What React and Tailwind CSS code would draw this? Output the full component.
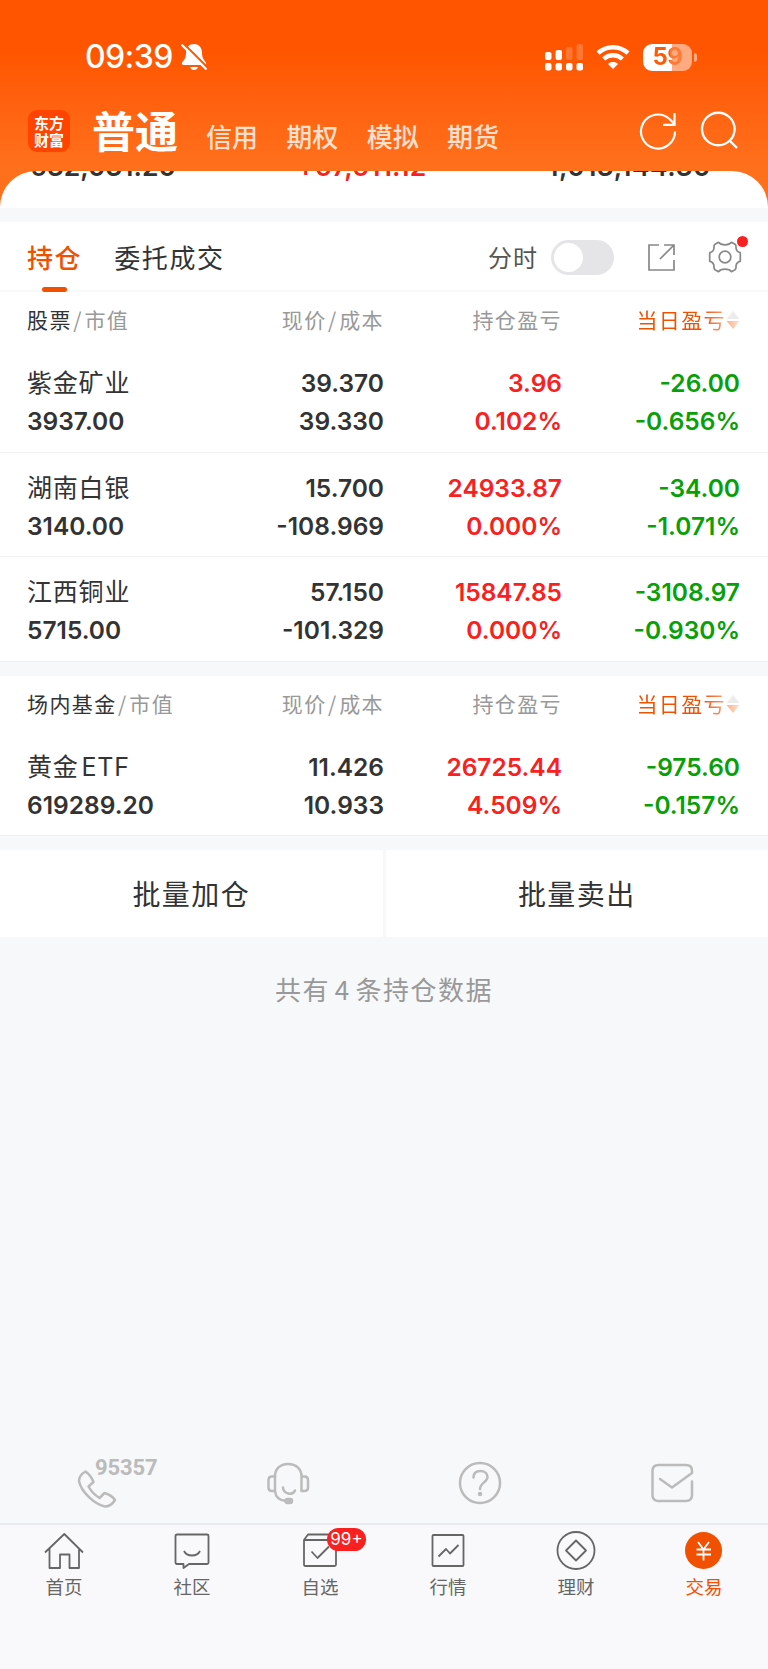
import React from 'react';
import clsx from 'clsx';

const stocks = [
  {
    name: '紫金矿业',
    value: '3937.00',
    price: '39.370',
    cost: '39.330',
    profit: '3.96',
    profitRate: '0.102%',
    day: '-26.00',
    dayRate: '-0.656%',
  },
  {
    name: '湖南白银',
    value: '3140.00',
    price: '15.700',
    cost: '-108.969',
    profit: '24933.87',
    profitRate: '0.000%',
    day: '-34.00',
    dayRate: '-1.071%',
  },
  {
    name: '江西铜业',
    value: '5715.00',
    price: '57.150',
    cost: '-101.329',
    profit: '15847.85',
    profitRate: '0.000%',
    day: '-3108.97',
    dayRate: '-0.930%',
  },
];

const funds = [
  {
    name: '黄金 ETF',
    value: '619289.20',
    price: '11.426',
    cost: '10.933',
    profit: '26725.44',
    profitRate: '4.509%',
    day: '-975.60',
    dayRate: '-0.157%',
  },
];

function StatusBar() {
  return (
    <div className="flex h-[114px] items-center justify-between pl-[85px] pr-[71px]">
      <div className="flex items-center gap-2 text-white">
        <span className="font-['Inter'] text-[32px] font-medium leading-none tracking-[-0.6px]">
          09:39
        </span>
        <svg width="26" height="28" viewBox="0 0 26 28" fill="none">
          <path
            d="M13 1C8.500 1 5.200 4.400 5.100 9c-.1 5.500-1.600 7.500-3.700 10-1 1.300-.6 3 1.200 3h20.800c1.800 0 2.200-1.700 1.200-3-2.100-2.500-3.600-4.500-3.700-10C20.800 4.400 17.500 1 13 1z"
            fill="white"
          />
          <path d="M9 24h8c-.6 2-2 3-4 3s-3.400-1-4-3z" fill="white" />
          <path d="M3 1l24 24" stroke="#ff5700" strokeWidth="2" />
          <path d="M1.200 2.200l23.600 23.600" stroke="white" strokeWidth="2.200" strokeLinecap="round" />
        </svg>
      </div>
      <div className="flex items-center">
        <svg width="39" height="28" viewBox="0 0 39 28" fill="white">
          <rect x="0" y="9" width="6.500" height="8" rx="2" />
          <rect x="10.500" y="7" width="6.500" height="10" rx="2" />
          <rect x="21" y="4" width="6.500" height="13" rx="2" opacity=".2" />
          <rect x="31.500" y="1" width="6.500" height="16" rx="2" opacity=".2" />
          <rect x="0" y="20" width="6.500" height="7.500" rx="2" />
          <rect x="10.500" y="20" width="6.500" height="7.500" rx="2" />
          <rect x="21" y="20" width="6.500" height="7.500" rx="2" />
          <rect x="31.500" y="20" width="6.500" height="7.500" rx="2" />
        </svg>
        <svg className="ml-3" width="34" height="26" viewBox="0 0 34 26" fill="none">
          <path d="M2 9.200C10.500 1.200 23.500 1.200 32 9.200" stroke="white" strokeWidth="4.600" />
          <path d="M7.600 15C13 10 21 10 26.400 15" stroke="white" strokeWidth="4.400" />
          <path d="M17 25l-5-5c2.800-2.600 7.200-2.600 10 0z" fill="white" />
        </svg>
        <div className="ml-[13px] flex h-[27px] w-[49px] items-center justify-center rounded-[9px] bg-linear-to-r from-white from-60% to-[#ffaa80] to-60%">
          <span className="bg-linear-to-r from-[#ff5a05] from-60% to-[#ff7a35] to-60% bg-clip-text font-['Inter'] text-[24px] font-bold leading-none tracking-[-0.5px] text-transparent">
            59
          </span>
        </div>
        <div className="ml-[2px] h-[9px] w-[3px] rounded-r-full bg-[#ffaa80]"></div>
      </div>
    </div>
  );
}

function TopNav() {
  return (
    <div className="flex h-[57px] items-start pl-7 pr-[30px]">
      <div className="mt-[-4px] flex h-[42px] w-[42px] flex-col items-center justify-center rounded-[9px] bg-[#ff4400] text-[15px] font-bold leading-[17px] text-white">
        <span>东方</span>
        <span>财富</span>
      </div>
      <div className="mt-[-7px] pl-[22px] text-[43px] font-bold leading-[44px] text-white">普通</div>
      <div className="mt-1 flex gap-[28.300px] pl-7 text-[26px] font-medium leading-[36px] text-[#ffe0cf]">
        <span>信用</span>
        <span>期权</span>
        <span>模拟</span>
        <span>期货</span>
      </div>
      <div className="ml-auto mt-[-3px] flex gap-[23px]">
        <svg width="38" height="40" viewBox="0 0 38 40" fill="none" stroke="white" strokeWidth="2.200">
          <path d="M36 20.500a17 17 0 1 1-5.500-12.500L36 13.500" />
          <path d="M35.500 2v11.800H24" />
        </svg>
        <svg width="38" height="40" viewBox="0 0 38 40" fill="none" stroke="white" strokeWidth="2.400">
          <circle cx="18.300" cy="18" r="16.300" />
          <path d="M29.500 29.500l7.500 7.500" />
        </svg>
      </div>
    </div>
  );
}

function Tabs() {
  return (
    <div className="flex h-[70px] items-start border-b-2 border-[#f7f8fa] bg-white pl-[27px] pr-[26px]">
      <div className="flex h-[70px] flex-col items-center justify-between text-[26px] font-medium leading-[70px] tracking-[1.600px] text-[#f05000]">
        <span className="h-[64px]">持仓</span>
        <span className="h-[5px] w-[25px] rounded-full bg-[#f05000]"></span>
      </div>
      <div className="pl-8 text-[26px] leading-[70px] tracking-[1.600px] text-[#333]">委托成交</div>
      <div className="ml-auto flex h-[70px] items-center">
        <span className="text-[24px] tracking-[1px] text-[#555]">分时</span>
        <div className="ml-[13px] h-[35px] w-[63px] rounded-full bg-[#e5e5e7] p-[3px]">
          <div className="h-[29px] w-[29px] rounded-full bg-white"></div>
        </div>
        <svg
          className="ml-[33px]"
          width="29"
          height="29"
          viewBox="0 0 29 29"
          fill="none"
          stroke="#888"
          strokeWidth="1.700"
        >
          <path d="M12 2H2v25h25V17" />
          <path d="M17 2h10v10M27 2L13 16" />
        </svg>
        <div className="relative ml-8">
          <svg width="34" height="34" viewBox="0 0 34 34" fill="none" stroke="#888" strokeWidth="1.700">
            <path
              d="M10.500 2.300C12 4.300 14 4.800 17 4.800S22 4.300 23.500 2.300L27 4.300Q28.300 5.200 28 8 28.300 11.500 32 12.600L32.300 13V21L32 21.400Q28.300 22.500 28 26 28.300 28.800 27 29.700L23.500 31.700C22 29.700 20 29.200 17 29.200S12 29.700 10.500 31.700L7 29.700Q5.700 28.800 6 26 5.700 22.500 2 21.400L1.700 21V13L2 12.600Q5.700 11.500 6 8 5.700 5.200 7 4.300z"
              strokeLinejoin="round"
            />
            <circle cx="17" cy="17" r="5.800" />
          </svg>
          <span className="absolute right-[-6px] top-[-4px] h-[11px] w-[11px] rounded-full bg-[#fa2020]"></span>
        </div>
      </div>
    </div>
  );
}

const columns = 'grid grid-cols-[167px_190px_178px_178px] pl-[27px]';

function Section({ title, rows, headClass }) {
  return (
    <div className="bg-white">
      <div
        className={clsx(columns, headClass, 'items-center text-right text-[21px] tracking-[1.400px] text-[#999]')}
      >
        <div className="whitespace-nowrap text-left">
          <span className="text-[#333]">{title}</span>
          <span className="px-[1.500px]">/</span>市值
        </div>
        <div>
          现价<span className="px-[1.500px]">/</span>成本
        </div>
        <div>持仓盈亏</div>
        <div className="flex items-center justify-end">
          <span className="bg-linear-to-r from-[#f05000] from-75% to-[#fba070] bg-clip-text text-transparent">
            当日盈亏
          </span>
          <svg width="14" height="20" viewBox="0 0 14 20">
            <defs>
              <linearGradient id="fade" x1="0" x2="1" y1="0" y2="0">
                <stop offset="0" stopColor="#f9b48e" />
                <stop offset="1" stopColor="#fde0d0" />
              </linearGradient>
            </defs>
            <path d="M7 1l6.500 8H.5z" fill="#ececec" />
            <path d="M7 19l6.500-8H.5z" fill="url(#fade)" />
          </svg>
        </div>
      </div>
      {rows.map((row) => (
        <div
          key={row.name}
          className={clsx(
            columns,
            "h-[104.500px] border-b border-[#f0f1f3] pt-4 text-right font-['Inter','Noto_Sans_CJK_SC',sans-serif] text-[24.500px] font-semibold leading-[38px] text-[#333]",
          )}
        >
          <div className="whitespace-nowrap text-left">
            <div className="text-[25px] font-normal tracking-[0.800px] [word-spacing:-5px]">{row.name}</div>
            <div>{row.value}</div>
          </div>
          <div>
            <div>{row.price}</div>
            <div>{row.cost}</div>
          </div>
          <div className="text-[#fa2020]">
            <div>{row.profit}</div>
            <div>{row.profitRate}</div>
          </div>
          <div className="text-[#08a008]">
            <div>{row.day}</div>
            <div>{row.dayRate}</div>
          </div>
        </div>
      ))}
    </div>
  );
}

function HelpLinks() {
  const icon = { fill: 'none', stroke: '#bbb', strokeWidth: 2.5, strokeLinecap: 'round', strokeLinejoin: 'round' };
  return (
    <div className="grid h-[66px] grid-cols-4 overflow-hidden text-center text-[21px] leading-[30px] text-[#666]">
      <div className="flex flex-col items-center">
        <div className="relative h-[60px] w-[80px] shrink-0">
          <svg width="80" height="60" viewBox="0 0 80 60" {...icon}>
            <path d="M29.500 14.500c-3.500 2-6.500 5.500-6.500 9.500 2 11 16 23.500 26 25.500 4 0 7.500-2.500 10-6.500-2.500-3.500-6.500-6-10.500-7l-5 5c-4-2.500-8.500-7-11-11.500l5-4.500c-1.500-4-4.500-8-8-10.500z" />
          </svg>
          <span className="absolute left-[39px] top-0 font-['Roboto'] text-[22px] font-bold leading-[22px] tracking-[-0.100px] text-[#bbb]">
            95357
          </span>
        </div>
        <span className="pt-[1px]">服务热线</span>
      </div>
      <div className="flex flex-col items-center">
        <svg className="shrink-0" width="60" height="60" viewBox="0 0 60 60" {...icon}>
          <path d="M17 34V19.500C17 12 22 7 30 7s13.500 5 13.500 12.500V34h3q3.500 0 3.500-3.500V23q0-3.500-3.500-3.500h-3" />
          <path d="M17 19.500h-3Q10.500 19.500 10.500 23v7.500q0 3.500 3.500 3.500H17c.5 6 4.500 9.500 11 10" />
          <path d="M25 30.500c.5 7 10 8 12 3" />
          <rect x="27.500" y="42" width="6.500" height="4" rx="2" fill="#bbb" />
        </svg>
        <span className="pt-[1px]">在线客服</span>
      </div>
      <div className="flex flex-col items-center">
        <svg className="shrink-0" width="60" height="60" viewBox="0 0 60 60" {...icon}>
          <circle cx="30" cy="26" r="20" />
          <path d="M23.500 20.500c0-4.500 3-6.500 7-6.500s7 2.500 7 6c0 5-7.500 6-7.500 12" />
          <circle cx="30" cy="37" r="1" fill="#bbb" />
        </svg>
        <span className="pt-[1px]">帮助中心</span>
      </div>
      <div className="flex flex-col items-center">
        <svg className="shrink-0" width="60" height="60" viewBox="0 0 60 60" {...icon}>
          <path d="M50 24.500V38q0 6-6 6H16.500q-6 0-6-6V14q0-6 6-6H44q6 0 6 6V16L30 30.500l-12-8.500" />
        </svg>
        <span className="pt-[1px]">意见反馈</span>
      </div>
    </div>
  );
}

function NavItem({ label, active, badge, children }) {
  return (
    <div className={clsx('flex flex-col items-center', active ? 'text-[#f05000]' : 'text-[#666]')}>
      <div className="relative h-[40px]">
        <svg
          width="40"
          height="40"
          viewBox="0 0 40 40"
          fill="none"
          stroke="currentColor"
          strokeWidth="1.800"
          strokeLinejoin="round"
        >
          {children}
        </svg>
        {badge && (
          <span className="absolute left-[27px] top-[-3px] flex h-[23px] w-[39px] items-center justify-center rounded-full bg-[#fa2020] font-['Inter'] text-[17px] leading-none text-white">
            {badge}
          </span>
        )}
      </div>
      <span className="pt-[2px] text-[18.500px] leading-[26px]">{label}</span>
    </div>
  );
}

function BottomNav() {
  return (
    <div className="grid h-[146px] grid-cols-6 border-t-2 border-[#e9ebee] bg-[#f9f9fb] pt-[6px]">
      <NavItem label="首页">
        <path d="M1 21.500L20.300 3 39 21.500M5.500 17.500V37H16V23.500h9.500V37H35V17.500" />
      </NavItem>
      <NavItem label="社区">
        <path d="M5 3.500h30q1.500 0 1.500 1.500v26.500q0 1.500-1.500 1.500H17l-5.500 4V33H5q-1.500 0-1.500-1.500V5Q3.500 3.500 5 3.500z" />
        <path d="M12 20c3 6 13 6 16 0" />
      </NavItem>
      <NavItem label="自选" badge="99+">
        <path d="M4 9h32v24.500q0 1.500-1.500 1.500h-29Q4 35 4 33.500zM4 9l4-5.500h24L36 9" />
        <path d="M11.500 20.500l6 6.500L29 15.500" />
      </NavItem>
      <NavItem label="行情">
        <rect x="4.500" y="4" width="31" height="31" rx="1" />
        <path d="M10.500 25.500l7.500-7.500 4 4.500 8.500-8.500" />
      </NavItem>
      <NavItem label="理财">
        <circle cx="20" cy="19.500" r="18.500" />
        <path d="M20 9.500l10 10-10 10-10-10z" />
      </NavItem>
      <NavItem label="交易" active>
        <circle cx="19.500" cy="19.500" r="18.500" fill="currentColor" stroke="none" />
        <path d="M14 11l5.500 7.500L25 11M12.500 18.500H27M12.500 23.500H27M19.500 18.500V29.500" stroke="white" />
      </NavItem>
    </div>
  );
}

export default function App() {
  return (
    <div className="flex h-[1669px] w-[768px] flex-col overflow-hidden bg-[#f7f8fa] font-['Noto_Sans_CJK_SC',sans-serif]">
      <div className="h-[208px] shrink-0 bg-linear-to-b from-[#ff5500] from-25% to-[#ff701c] to-80%">
        <StatusBar />
        <TopNav />
        <div className="h-[37px] overflow-hidden rounded-t-[36px] bg-white">
          <div className="mt-[-25px] flex justify-between pl-[30px] pr-[57px] font-['Inter'] text-[26.500px] font-semibold leading-[40px] text-[#333]">
            <span>632,031.20</span>
            <span className="tracking-[0.200px] text-[#fa2020]">+67,611.12</span>
            <span className="tracking-[0.500px]">1,013,144.30</span>
          </div>
        </div>
      </div>
      <div className="mt-[14px]">
        <Tabs />
        <Section title="股票" rows={stocks} headClass="h-[56px]" />
      </div>
      <div className="mt-[14px]">
        <Section title="场内基金" rows={funds} headClass="h-[56px]" />
      </div>
      <div className="mt-[14px] grid grid-cols-2 gap-[3px] text-center text-[28px] leading-[87px] tracking-[1.400px] text-[#333]">
        <div className="bg-white">批量加仓</div>
        <div className="bg-white">批量卖出</div>
      </div>
      <div className="pt-[33px] text-center text-[26px] leading-[38px] tracking-[1.500px] text-[#999] [word-spacing:-2.500px]">
        共有 4 条持仓数据
      </div>
      <div className="mt-auto">
        <HelpLinks />
        <BottomNav />
      </div>
    </div>
  );
}
